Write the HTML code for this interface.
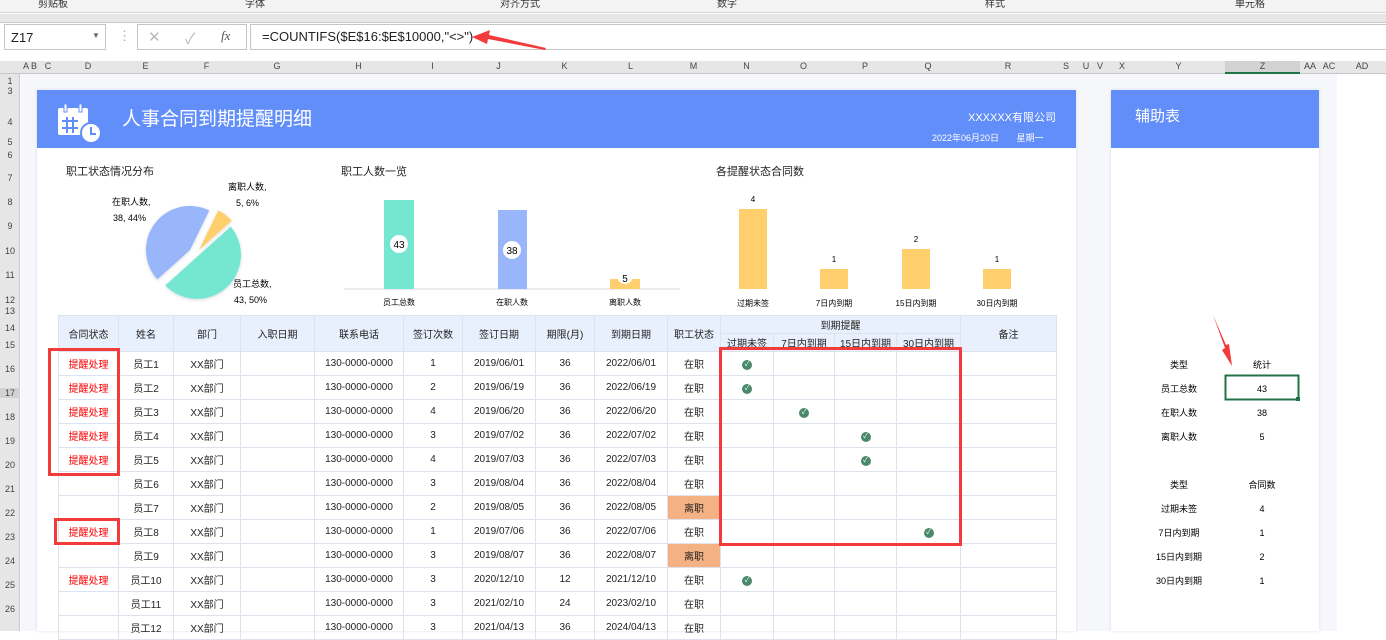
<!DOCTYPE html>
<html><head><meta charset="utf-8"><style>
*{margin:0;padding:0;box-sizing:border-box}
body{width:1386px;height:631px;overflow:hidden;background:#fff;font-family:"Liberation Sans","Noto Sans CJK SC",sans-serif;position:relative;color:#222}
.a{position:absolute}
.t{position:absolute;font-size:10px;white-space:nowrap}
table{border-collapse:collapse;table-layout:fixed;position:absolute;left:58px;top:315px;font-size:10px;font-family:"Liberation Sans","Noto Sans CJK SC",sans-serif}
td{border:1px solid #dde2ec;text-align:center;height:24px;padding:0;overflow:hidden;white-space:nowrap}
.h td{background:#e9f0fd;height:18px}
.red{color:#f00}
.off{background:#f4b183}
.ck{display:inline-block;width:10px;height:10px;border-radius:50%;background:#4a8a6a;color:#fff;font-size:7px;line-height:10px}
.ch{position:absolute;top:61px;height:13px;font-size:9px;color:#444;text-align:center}
.rh{position:absolute;left:0;width:20px;font-size:9px;color:#444;text-align:center}
</style></head><body>
<div class="a" style="left:0;top:0;width:1386px;height:13px;background:#f3f3f3;border-bottom:1px solid #d5d5d5"></div>
<div class="t" style="left:38px;top:-5px;color:#333">剪贴板</div>
<div class="t" style="left:245px;top:-5px;color:#333">字体</div>
<div class="t" style="left:500px;top:-5px;color:#333">对齐方式</div>
<div class="t" style="left:717px;top:-5px;color:#333">数字</div>
<div class="t" style="left:985px;top:-5px;color:#333">样式</div>
<div class="t" style="left:1235px;top:-5px;color:#333">单元格</div>
<div class="a" style="left:0;top:14px;width:1386px;height:9px;background:#e6e6e6;border-bottom:1px solid #c8c8c8"></div>
<div class="a" style="left:0;top:24px;width:1386px;height:37px;background:#fff"></div>
<div class="a" style="left:4px;top:24px;width:102px;height:26px;border:1px solid #c6c6c6"></div>
<div class="t" style="left:11px;top:30px;font-size:13px">Z17</div>
<div class="t" style="left:92px;top:31px;font-size:8px;color:#666">▼</div>
<div class="t" style="left:118px;top:28px;font-size:13px;color:#aaa">⋮</div>
<div class="a" style="left:137px;top:24px;width:110px;height:26px;border:1px solid #c6c6c6"></div>
<div class="t" style="left:148px;top:28px;font-size:15px;color:#bbb">✕</div>
<div class="t" style="left:185px;top:28px;font-size:15px;color:#bbb">✓</div>
<div class="t" style="left:221px;top:28px;font-size:13px;font-style:italic;font-family:'Liberation Serif',serif;color:#555">fx</div>
<div class="a" style="left:250px;top:24px;width:1140px;height:26px;border:1px solid #c6c6c6"></div>
<div class="t" style="left:262px;top:29px;font-size:13px">=COUNTIFS($E$16:$E$10000,"&lt;&gt;")</div>
<svg class="a" style="left:0;top:0" width="1386" height="631">
<polygon points="472,37 490,30 489,35 546,48 545,50 488,39 487,44" fill="#f23b3b"/>
</svg>
<div class="a" style="left:0;top:61px;width:1386px;height:13px;background:#e6e6e6;border-bottom:1px solid #c8c8c8"></div>
<div class="a" style="left:1225px;top:61px;width:75px;height:13px;background:#d2d2d2;border-bottom:2px solid #217346"></div>
<div class="ch" style="left:20px;width:12px">A</div><div class="ch" style="left:30px;width:8px">B</div><div class="ch" style="left:40px;width:16px">C</div>
<div class="ch" style="left:58px;width:60px">D</div><div class="ch" style="left:118px;width:55px">E</div><div class="ch" style="left:173px;width:67px">F</div>
<div class="ch" style="left:240px;width:74px">G</div><div class="ch" style="left:314px;width:89px">H</div><div class="ch" style="left:403px;width:59px">I</div>
<div class="ch" style="left:462px;width:73px">J</div><div class="ch" style="left:535px;width:59px">K</div><div class="ch" style="left:594px;width:73px">L</div>
<div class="ch" style="left:667px;width:53px">M</div><div class="ch" style="left:720px;width:53px">N</div><div class="ch" style="left:773px;width:61px">O</div>
<div class="ch" style="left:834px;width:62px">P</div><div class="ch" style="left:896px;width:64px">Q</div><div class="ch" style="left:960px;width:96px">R</div>
<div class="ch" style="left:1056px;width:20px">S</div><div class="ch" style="left:1080px;width:12px">U</div><div class="ch" style="left:1094px;width:12px">V</div>
<div class="ch" style="left:1112px;width:20px">X</div><div class="ch" style="left:1132px;width:93px">Y</div><div class="ch" style="left:1225px;width:75px">Z</div>
<div class="ch" style="left:1300px;width:20px">AA</div><div class="ch" style="left:1320px;width:18px">AC</div><div class="ch" style="left:1338px;width:48px">AD</div>
<div class="a" style="left:0;top:74px;width:20px;height:557px;background:#e6e6e6;border-right:1px solid #c8c8c8"></div>
<div class="rh" style="top:76px">1</div><div class="rh" style="top:86px">3</div><div class="rh" style="top:117px">4</div><div class="rh" style="top:137px">5</div>
<div class="rh" style="top:150px">6</div><div class="rh" style="top:173px">7</div><div class="rh" style="top:197px">8</div><div class="rh" style="top:221px">9</div>
<div class="rh" style="top:246px">10</div><div class="rh" style="top:270px">11</div><div class="rh" style="top:295px">12</div><div class="rh" style="top:306px">13</div>
<div class="rh" style="top:323px">14</div><div class="rh" style="top:340px">15</div><div class="rh" style="top:364px">16</div><div class="rh" style="top:388px;background:#d2d2d2">17</div>
<div class="rh" style="top:412px">18</div><div class="rh" style="top:436px">19</div><div class="rh" style="top:460px">20</div><div class="rh" style="top:484px">21</div>
<div class="rh" style="top:508px">22</div><div class="rh" style="top:532px">23</div><div class="rh" style="top:556px">24</div><div class="rh" style="top:580px">25</div>
<div class="rh" style="top:604px">26</div>
<div class="a" style="left:21px;top:74px;width:1316px;height:557px;background:#f5f7fb"></div>
<div class="a" style="left:37px;top:90px;width:1039px;height:541px;background:#fff;box-shadow:0 0 3px #dde"></div>
<div class="a" style="left:37px;top:90px;width:1039px;height:58px;background:#618ef8"></div>
<svg class="a" style="left:56px;top:103px" width="50" height="40">
<rect x="2" y="5" width="30" height="27" rx="2" fill="#fff"/>
<rect x="8" y="1" width="3" height="8" fill="#fff" stroke="#618ef8"/><rect x="23" y="1" width="3" height="8" fill="#fff" stroke="#618ef8"/>
<path d="M6 18h16M6 25h16M11 14v16M17 14v16" stroke="#618ef8" stroke-width="2"/>
<circle cx="35" cy="30" r="10" fill="#fff" stroke="#618ef8" stroke-width="2"/>
<path d="M35 24v7h5" stroke="#618ef8" stroke-width="2" fill="none"/>
</svg>
<div class="t" style="left:122px;top:104px;font-size:19px;color:#fff">人事合同到期提醒明细</div>
<div class="t" style="left:968px;top:109px;font-size:11px;color:#fff">XXXXXX有限公司</div>
<div class="t" style="left:932px;top:131px;font-size:9px;color:#fff">2022年06月20日&nbsp;&nbsp;&nbsp;&nbsp;&nbsp;&nbsp;&nbsp;星期一</div>
<div class="a" style="left:1111px;top:90px;width:208px;height:541px;background:#fff;box-shadow:0 0 3px #dde"></div>
<div class="a" style="left:1111px;top:90px;width:208px;height:58px;background:#618ef8"></div>
<div class="t" style="left:1135px;top:105px;font-size:15px;color:#fff">辅助表</div>
<div class="t" style="left:66px;top:163px;font-size:11px">职工状态情况分布</div>
<div class="t" style="left:341px;top:163px;font-size:11px">职工人数一览</div>
<div class="t" style="left:716px;top:163px;font-size:11px">各提醒状态合同数</div>
<svg class="a" style="left:0;top:0" width="1386" height="631" font-family="Liberation Sans,Noto Sans CJK SC,sans-serif" font-size="9">
<defs><filter id="sh"><feDropShadow dx="0" dy="1" stdDeviation="1.5" flood-color="#000" flood-opacity="0.15"/></filter></defs>
<g filter="url(#sh)">
<path d="M198 256 L230.7 226.6 A44 44 0 0 1 165.3 285.4 Z" fill="#75e6cf"/>
<path d="M190 250 L157.3 279.4 A44 44 0 0 1 209.3 210.4 Z" fill="#99b6fb"/>
<path d="M199 250 L218.3 210.4 A44 44 0 0 1 231.7 220.6 Z" fill="#ffcf6e"/>
</g>
<text x="112" y="205">在职人数,</text><text x="113" y="221">38, 44%</text>
<text x="228" y="190">离职人数,</text><text x="236" y="206">5, 6%</text>
<text x="233" y="287">员工总数,</text><text x="234" y="303">43, 50%</text>
<line x1="344" y1="289" x2="680" y2="289" stroke="#d9d9d9"/>
<rect x="384" y="200" width="30" height="89" fill="#75e6cf"/>
<rect x="498" y="210" width="29" height="79" fill="#99b6fb"/>
<rect x="610" y="279" width="30" height="10" fill="#ffcf6e"/>
<circle cx="399" cy="244" r="9" fill="#fff"/><text x="399" y="248" text-anchor="middle" font-size="10">43</text>
<circle cx="512" cy="250" r="9" fill="#fff"/><text x="512" y="254" text-anchor="middle" font-size="10">38</text>
<circle cx="625" cy="276" r="8" fill="#fff"/><text x="625" y="282" text-anchor="middle" font-size="10">5</text>
<text x="399" y="305" text-anchor="middle" font-size="8">员工总数</text>
<text x="512" y="305" text-anchor="middle" font-size="8">在职人数</text>
<text x="625" y="305" text-anchor="middle" font-size="8">离职人数</text>
<rect x="739" y="209" width="28" height="80" fill="#ffcf6e"/>
<rect x="820" y="269" width="28" height="20" fill="#ffcf6e"/>
<rect x="902" y="249" width="28" height="40" fill="#ffcf6e"/>
<rect x="983" y="269" width="28" height="20" fill="#ffcf6e"/>
<g text-anchor="middle" font-size="8">
<text x="753" y="202">4</text><text x="834" y="262">1</text><text x="916" y="242">2</text><text x="997" y="262">1</text>
<text x="753" y="306">过期未签</text><text x="834" y="306">7日内到期</text><text x="916" y="306">15日内到期</text><text x="997" y="306">30日内到期</text>
</g>
<g text-anchor="middle" font-size="9">
<text x="1179" y="368">类型</text><text x="1262" y="368">统计</text>
<text x="1179" y="392">员工总数</text><text x="1262" y="392">43</text>
<text x="1179" y="416">在职人数</text><text x="1262" y="416">38</text>
<text x="1179" y="440">离职人数</text><text x="1262" y="440">5</text>
<text x="1179" y="488">类型</text><text x="1262" y="488">合同数</text>
<text x="1179" y="512">过期未签</text><text x="1262" y="512">4</text>
<text x="1179" y="536">7日内到期</text><text x="1262" y="536">1</text>
<text x="1179" y="560">15日内到期</text><text x="1262" y="560">2</text>
<text x="1179" y="584">30日内到期</text><text x="1262" y="584">1</text>
</g>
<rect x="1225.5" y="375.5" width="73" height="24" fill="none" stroke="#217346" stroke-width="2"/>
<rect x="1296" y="397" width="4" height="4" fill="#217346"/>
<polygon points="1213,315 1226,345 1229,344 1232,366 1222,350 1225,348" fill="#f23b3b"/>
</svg>
<table>
<colgroup><col style="width:60px"><col style="width:55px"><col style="width:67px"><col style="width:74px"><col style="width:89px"><col style="width:59px"><col style="width:73px"><col style="width:59px"><col style="width:73px"><col style="width:53px"><col style="width:53px"><col style="width:61px"><col style="width:62px"><col style="width:64px"><col style="width:96px"></colgroup>
<tr class="h"><td rowspan="2">合同状态</td><td rowspan="2">姓名</td><td rowspan="2">部门</td><td rowspan="2">入职日期</td><td rowspan="2">联系电话</td><td rowspan="2">签订次数</td><td rowspan="2">签订日期</td><td rowspan="2">期限(月)</td><td rowspan="2">到期日期</td><td rowspan="2">职工状态</td><td colspan="4">到期提醒</td><td rowspan="2">备注</td></tr>
<tr class="h"><td>过期未签</td><td>7日内到期</td><td>15日内到期</td><td>30日内到期</td></tr>
<tr><td class="red">提醒处理</td><td>员工1</td><td>XX部门</td><td></td><td>130-0000-0000</td><td>1</td><td>2019/06/01</td><td>36</td><td>2022/06/01</td><td>在职</td><td><span class="ck">✓</span></td><td></td><td></td><td></td><td></td></tr>
<tr><td class="red">提醒处理</td><td>员工2</td><td>XX部门</td><td></td><td>130-0000-0000</td><td>2</td><td>2019/06/19</td><td>36</td><td>2022/06/19</td><td>在职</td><td><span class="ck">✓</span></td><td></td><td></td><td></td><td></td></tr>
<tr><td class="red">提醒处理</td><td>员工3</td><td>XX部门</td><td></td><td>130-0000-0000</td><td>4</td><td>2019/06/20</td><td>36</td><td>2022/06/20</td><td>在职</td><td></td><td><span class="ck">✓</span></td><td></td><td></td><td></td></tr>
<tr><td class="red">提醒处理</td><td>员工4</td><td>XX部门</td><td></td><td>130-0000-0000</td><td>3</td><td>2019/07/02</td><td>36</td><td>2022/07/02</td><td>在职</td><td></td><td></td><td><span class="ck">✓</span></td><td></td><td></td></tr>
<tr><td class="red">提醒处理</td><td>员工5</td><td>XX部门</td><td></td><td>130-0000-0000</td><td>4</td><td>2019/07/03</td><td>36</td><td>2022/07/03</td><td>在职</td><td></td><td></td><td><span class="ck">✓</span></td><td></td><td></td></tr>
<tr><td></td><td>员工6</td><td>XX部门</td><td></td><td>130-0000-0000</td><td>3</td><td>2019/08/04</td><td>36</td><td>2022/08/04</td><td>在职</td><td></td><td></td><td></td><td></td><td></td></tr>
<tr><td></td><td>员工7</td><td>XX部门</td><td></td><td>130-0000-0000</td><td>2</td><td>2019/08/05</td><td>36</td><td>2022/08/05</td><td class="off">离职</td><td></td><td></td><td></td><td></td><td></td></tr>
<tr><td class="red">提醒处理</td><td>员工8</td><td>XX部门</td><td></td><td>130-0000-0000</td><td>1</td><td>2019/07/06</td><td>36</td><td>2022/07/06</td><td>在职</td><td></td><td></td><td></td><td><span class="ck">✓</span></td><td></td></tr>
<tr><td></td><td>员工9</td><td>XX部门</td><td></td><td>130-0000-0000</td><td>3</td><td>2019/08/07</td><td>36</td><td>2022/08/07</td><td class="off">离职</td><td></td><td></td><td></td><td></td><td></td></tr>
<tr><td class="red">提醒处理</td><td>员工10</td><td>XX部门</td><td></td><td>130-0000-0000</td><td>3</td><td>2020/12/10</td><td>12</td><td>2021/12/10</td><td>在职</td><td><span class="ck">✓</span></td><td></td><td></td><td></td><td></td></tr>
<tr><td></td><td>员工11</td><td>XX部门</td><td></td><td>130-0000-0000</td><td>3</td><td>2021/02/10</td><td>24</td><td>2023/02/10</td><td>在职</td><td></td><td></td><td></td><td></td><td></td></tr>
<tr><td></td><td>员工12</td><td>XX部门</td><td></td><td>130-0000-0000</td><td>3</td><td>2021/04/13</td><td>36</td><td>2024/04/13</td><td>在职</td><td></td><td></td><td></td><td></td><td></td></tr>
</table>
<div class="a" style="left:48px;top:348px;width:72px;height:128px;border:3px solid #f23b3b"></div>
<div class="a" style="left:54px;top:518px;width:66px;height:27px;border:3px solid #f23b3b"></div>
<div class="a" style="left:719px;top:347px;width:243px;height:199px;border:3px solid #f23b3b"></div>
</body></html>
